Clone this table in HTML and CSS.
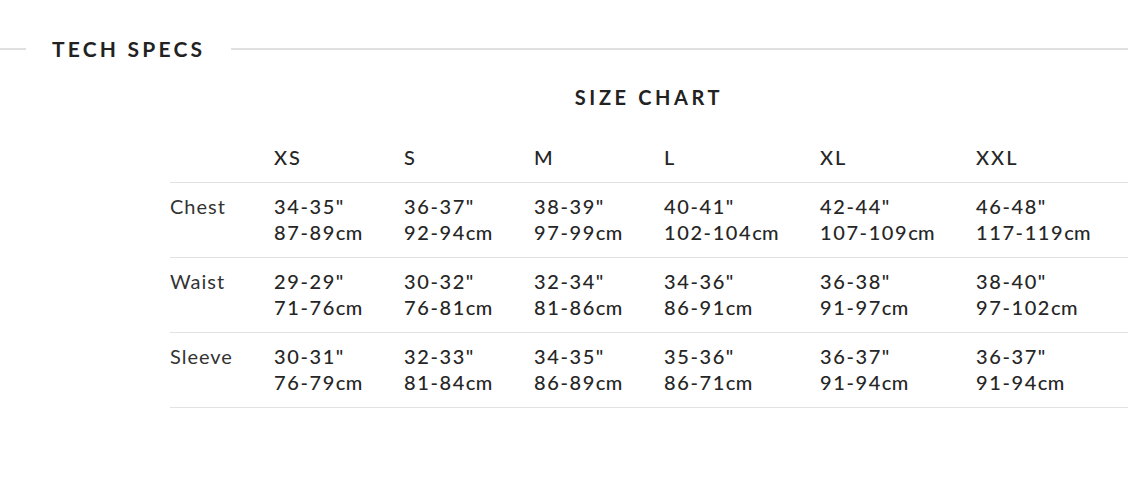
FILE: index.html
```html
<!DOCTYPE html>
<html lang="en">
<head>
<meta charset="utf-8">
<title>Tech Specs</title>
<link rel="stylesheet" href="styles.css">
</head>
<body>
<div class="page">
  <div class="section-head">
    <span class="rule rule-short"></span>
    <h2 class="section-title">TECH SPECS</h2>
    <span class="rule rule-long"></span>
  </div>
  <div class="chart">
    <h3 class="chart-title">SIZE CHART</h3>
    <div class="grid">
      <div class="cell head"></div>
      <div class="cell head">XS</div>
      <div class="cell head">S</div>
      <div class="cell head">M</div>
      <div class="cell head">L</div>
      <div class="cell head">XL</div>
      <div class="cell head">XXL</div>

      <div class="cell label">Chest</div>
      <div class="cell val">34-35"<br>87-89<span class="u">cm</span></div>
      <div class="cell val">36-37"<br>92-94<span class="u">cm</span></div>
      <div class="cell val">38-39"<br>97-99<span class="u">cm</span></div>
      <div class="cell val">40-41"<br>102-104<span class="u">cm</span></div>
      <div class="cell val">42-44"<br>107-109<span class="u">cm</span></div>
      <div class="cell val">46-48"<br>117-119<span class="u">cm</span></div>

      <div class="cell label">Waist</div>
      <div class="cell val">29-29"<br>71-76<span class="u">cm</span></div>
      <div class="cell val">30-32"<br>76-81<span class="u">cm</span></div>
      <div class="cell val">32-34"<br>81-86<span class="u">cm</span></div>
      <div class="cell val">34-36"<br>86-91<span class="u">cm</span></div>
      <div class="cell val">36-38"<br>91-97<span class="u">cm</span></div>
      <div class="cell val">38-40"<br>97-102<span class="u">cm</span></div>

      <div class="cell label">Sleeve</div>
      <div class="cell val">30-31"<br>76-79<span class="u">cm</span></div>
      <div class="cell val">32-33"<br>81-84<span class="u">cm</span></div>
      <div class="cell val">34-35"<br>86-89<span class="u">cm</span></div>
      <div class="cell val">35-36"<br>86-71<span class="u">cm</span></div>
      <div class="cell val">36-37"<br>91-94<span class="u">cm</span></div>
      <div class="cell val">36-37"<br>91-94<span class="u">cm</span></div>
    </div>
  </div>
</div>
</body>
</html>
```

FILE: styles.css
```css
html, body {
  margin: 0;
  padding: 0;
  background: #ffffff;
}

body {
  font-family: Lato, "Open Sans", sans-serif;
  color: #262626;
}

.page {
  padding: 36px 8px 0 0;
}

.section-head {
  display: flex;
  align-items: center;
  gap: 26px;
  height: 26px;
}

.rule {
  display: block;
  height: 2px;
  background: #e0e0e0;
}

.rule-short {
  width: 26px;
}

.rule-long {
  flex: 1;
}

.section-title {
  margin: 0;
  font-size: 21px;
  font-weight: 700;
  letter-spacing: 3.2px;
  color: #222;
  line-height: 26px;
}

.chart {
  margin: 0 0 0 170px;
}

.chart-title {
  margin: 22px 0 0 0;
  text-align: center;
  font-size: 20px;
  font-weight: 700;
  letter-spacing: 3.6px;
  line-height: 26px;
  color: #222;
}

.grid {
  display: grid;
  grid-template-columns: 104px 130px 130px 130px 156px 156px 152px;
  margin-top: 34px;
}

.cell {
  font-size: 20px;
  line-height: 26px;
  border-bottom: 1px solid #e2e2e2;
}

.head {
  font-weight: 500;
  letter-spacing: 2px;
  padding: 0 0 12px 0;
}

.label,
.val {
  padding: 10px 0 12px 0;
}

.label {
  font-weight: 400;
  color: #333;
  letter-spacing: 1px;
}

.val {
  font-weight: 500;
  letter-spacing: 1.6px;
}

.u {
  letter-spacing: 0.3px;
}
```
